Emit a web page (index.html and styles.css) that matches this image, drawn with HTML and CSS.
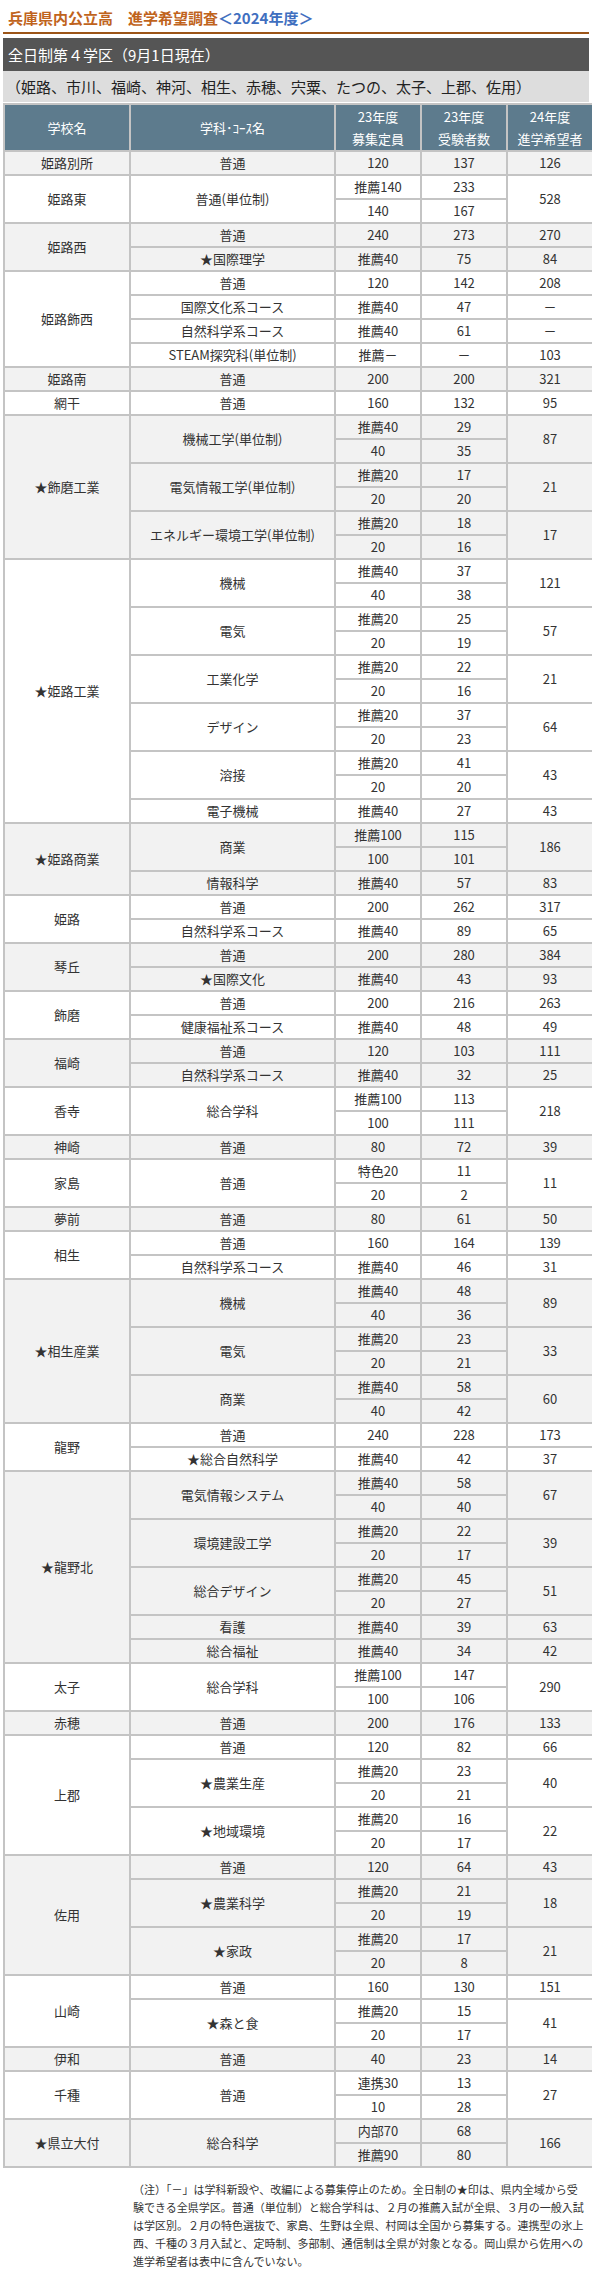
FILE: index.html
```html
<!DOCTYPE html>
<html lang="ja">
<head>
<meta charset="utf-8">
<title>兵庫県内公立高　進学希望調査</title>
<link rel="stylesheet" href="styles.css">
</head>
<body>
<div class="page">
  <h1 class="title">兵庫県内公立高　進学希望調査<span class="year">＜2024年度＞</span></h1>
  <div class="district">全日制第４学区（9月1日現在）</div>
  <div class="area">（姫路、市川、福崎、神河、相生、赤穂、宍粟、たつの、太子、上郡、佐用）</div>
  <table class="data">
    <colgroup>
      <col class="c-school"><col class="c-course"><col class="c-num"><col class="c-num"><col class="c-num">
    </colgroup>
    <thead>
      <tr><th>学校名</th><th>学科･ｺｰｽ名</th><th>23年度<br>募集定員</th><th>23年度<br>受験者数</th><th>24年度<br>進学希望者</th></tr>
    </thead>
    <tbody>
      <tr class="g"><td>姫路別所</td><td>普通</td><td>120</td><td>137</td><td>126</td></tr>

      <tr class="w"><td rowspan="2">姫路東</td><td rowspan="2">普通(単位制)</td><td>推薦140</td><td>233</td><td rowspan="2">528</td></tr>
      <tr class="w"><td>140</td><td>167</td></tr>

      <tr class="g"><td rowspan="2">姫路西</td><td>普通</td><td>240</td><td>273</td><td>270</td></tr>
      <tr class="g"><td>★国際理学</td><td>推薦40</td><td>75</td><td>84</td></tr>

      <tr class="w"><td rowspan="4">姫路飾西</td><td>普通</td><td>120</td><td>142</td><td>208</td></tr>
      <tr class="w"><td>国際文化系コース</td><td>推薦40</td><td>47</td><td>－</td></tr>
      <tr class="w"><td>自然科学系コース</td><td>推薦40</td><td>61</td><td>－</td></tr>
      <tr class="w"><td>STEAM探究科(単位制)</td><td>推薦－</td><td>－</td><td>103</td></tr>

      <tr class="g"><td>姫路南</td><td>普通</td><td>200</td><td>200</td><td>321</td></tr>
      <tr class="w"><td>網干</td><td>普通</td><td>160</td><td>132</td><td>95</td></tr>

      <tr class="g"><td rowspan="6">★飾磨工業</td><td rowspan="2">機械工学(単位制)</td><td>推薦40</td><td>29</td><td rowspan="2">87</td></tr>
      <tr class="g"><td>40</td><td>35</td></tr>
      <tr class="g"><td rowspan="2">電気情報工学(単位制)</td><td>推薦20</td><td>17</td><td rowspan="2">21</td></tr>
      <tr class="g"><td>20</td><td>20</td></tr>
      <tr class="g"><td rowspan="2">エネルギー環境工学(単位制)</td><td>推薦20</td><td>18</td><td rowspan="2">17</td></tr>
      <tr class="g"><td>20</td><td>16</td></tr>

      <tr class="w"><td rowspan="11">★姫路工業</td><td rowspan="2">機械</td><td>推薦40</td><td>37</td><td rowspan="2">121</td></tr>
      <tr class="w"><td>40</td><td>38</td></tr>
      <tr class="w"><td rowspan="2">電気</td><td>推薦20</td><td>25</td><td rowspan="2">57</td></tr>
      <tr class="w"><td>20</td><td>19</td></tr>
      <tr class="w"><td rowspan="2">工業化学</td><td>推薦20</td><td>22</td><td rowspan="2">21</td></tr>
      <tr class="w"><td>20</td><td>16</td></tr>
      <tr class="w"><td rowspan="2">デザイン</td><td>推薦20</td><td>37</td><td rowspan="2">64</td></tr>
      <tr class="w"><td>20</td><td>23</td></tr>
      <tr class="w"><td rowspan="2">溶接</td><td>推薦20</td><td>41</td><td rowspan="2">43</td></tr>
      <tr class="w"><td>20</td><td>20</td></tr>
      <tr class="w"><td>電子機械</td><td>推薦40</td><td>27</td><td>43</td></tr>

      <tr class="g"><td rowspan="3">★姫路商業</td><td rowspan="2">商業</td><td>推薦100</td><td>115</td><td rowspan="2">186</td></tr>
      <tr class="g"><td>100</td><td>101</td></tr>
      <tr class="g"><td>情報科学</td><td>推薦40</td><td>57</td><td>83</td></tr>

      <tr class="w"><td rowspan="2">姫路</td><td>普通</td><td>200</td><td>262</td><td>317</td></tr>
      <tr class="w"><td>自然科学系コース</td><td>推薦40</td><td>89</td><td>65</td></tr>

      <tr class="g"><td rowspan="2">琴丘</td><td>普通</td><td>200</td><td>280</td><td>384</td></tr>
      <tr class="g"><td>★国際文化</td><td>推薦40</td><td>43</td><td>93</td></tr>

      <tr class="w"><td rowspan="2">飾磨</td><td>普通</td><td>200</td><td>216</td><td>263</td></tr>
      <tr class="w"><td>健康福祉系コース</td><td>推薦40</td><td>48</td><td>49</td></tr>

      <tr class="g"><td rowspan="2">福崎</td><td>普通</td><td>120</td><td>103</td><td>111</td></tr>
      <tr class="g"><td>自然科学系コース</td><td>推薦40</td><td>32</td><td>25</td></tr>

      <tr class="w"><td rowspan="2">香寺</td><td rowspan="2">総合学科</td><td>推薦100</td><td>113</td><td rowspan="2">218</td></tr>
      <tr class="w"><td>100</td><td>111</td></tr>

      <tr class="g"><td>神崎</td><td>普通</td><td>80</td><td>72</td><td>39</td></tr>

      <tr class="w"><td rowspan="2">家島</td><td rowspan="2">普通</td><td>特色20</td><td>11</td><td rowspan="2">11</td></tr>
      <tr class="w"><td>20</td><td>2</td></tr>

      <tr class="g"><td>夢前</td><td>普通</td><td>80</td><td>61</td><td>50</td></tr>

      <tr class="w"><td rowspan="2">相生</td><td>普通</td><td>160</td><td>164</td><td>139</td></tr>
      <tr class="w"><td>自然科学系コース</td><td>推薦40</td><td>46</td><td>31</td></tr>

      <tr class="g"><td rowspan="6">★相生産業</td><td rowspan="2">機械</td><td>推薦40</td><td>48</td><td rowspan="2">89</td></tr>
      <tr class="g"><td>40</td><td>36</td></tr>
      <tr class="g"><td rowspan="2">電気</td><td>推薦20</td><td>23</td><td rowspan="2">33</td></tr>
      <tr class="g"><td>20</td><td>21</td></tr>
      <tr class="g"><td rowspan="2">商業</td><td>推薦40</td><td>58</td><td rowspan="2">60</td></tr>
      <tr class="g"><td>40</td><td>42</td></tr>

      <tr class="w"><td rowspan="2">龍野</td><td>普通</td><td>240</td><td>228</td><td>173</td></tr>
      <tr class="w"><td>★総合自然科学</td><td>推薦40</td><td>42</td><td>37</td></tr>

      <tr class="g"><td rowspan="8">★龍野北</td><td rowspan="2">電気情報システム</td><td>推薦40</td><td>58</td><td rowspan="2">67</td></tr>
      <tr class="g"><td>40</td><td>40</td></tr>
      <tr class="g"><td rowspan="2">環境建設工学</td><td>推薦20</td><td>22</td><td rowspan="2">39</td></tr>
      <tr class="g"><td>20</td><td>17</td></tr>
      <tr class="g"><td rowspan="2">総合デザイン</td><td>推薦20</td><td>45</td><td rowspan="2">51</td></tr>
      <tr class="g"><td>20</td><td>27</td></tr>
      <tr class="g"><td>看護</td><td>推薦40</td><td>39</td><td>63</td></tr>
      <tr class="g"><td>総合福祉</td><td>推薦40</td><td>34</td><td>42</td></tr>

      <tr class="w"><td rowspan="2">太子</td><td rowspan="2">総合学科</td><td>推薦100</td><td>147</td><td rowspan="2">290</td></tr>
      <tr class="w"><td>100</td><td>106</td></tr>

      <tr class="g"><td>赤穂</td><td>普通</td><td>200</td><td>176</td><td>133</td></tr>

      <tr class="w"><td rowspan="5">上郡</td><td>普通</td><td>120</td><td>82</td><td>66</td></tr>
      <tr class="w"><td rowspan="2">★農業生産</td><td>推薦20</td><td>23</td><td rowspan="2">40</td></tr>
      <tr class="w"><td>20</td><td>21</td></tr>
      <tr class="w"><td rowspan="2">★地域環境</td><td>推薦20</td><td>16</td><td rowspan="2">22</td></tr>
      <tr class="w"><td>20</td><td>17</td></tr>

      <tr class="g"><td rowspan="5">佐用</td><td>普通</td><td>120</td><td>64</td><td>43</td></tr>
      <tr class="g"><td rowspan="2">★農業科学</td><td>推薦20</td><td>21</td><td rowspan="2">18</td></tr>
      <tr class="g"><td>20</td><td>19</td></tr>
      <tr class="g"><td rowspan="2">★家政</td><td>推薦20</td><td>17</td><td rowspan="2">21</td></tr>
      <tr class="g"><td>20</td><td>8</td></tr>

      <tr class="w"><td rowspan="3">山崎</td><td>普通</td><td>160</td><td>130</td><td>151</td></tr>
      <tr class="w"><td rowspan="2">★森と食</td><td>推薦20</td><td>15</td><td rowspan="2">41</td></tr>
      <tr class="w"><td>20</td><td>17</td></tr>

      <tr class="g"><td>伊和</td><td>普通</td><td>40</td><td>23</td><td>14</td></tr>

      <tr class="w"><td rowspan="2">千種</td><td rowspan="2">普通</td><td>連携30</td><td>13</td><td rowspan="2">27</td></tr>
      <tr class="w"><td>10</td><td>28</td></tr>

      <tr class="g"><td rowspan="2">★県立大付</td><td rowspan="2">総合科学</td><td>内部70</td><td>68</td><td rowspan="2">166</td></tr>
      <tr class="g"><td>推薦90</td><td>80</td></tr>
    </tbody>
  </table>
  <p class="note">（注）「－」は学科新設や、改編による募集停止のため。全日制の★印は、県内全域から受験できる全県学区。普通（単位制）と総合学科は、２月の推薦入試が全県、３月の一般入試は学区別。２月の特色選抜で、家島、生野は全県、村岡は全国から募集する。連携型の氷上西、千種の３月入試と、定時制、多部制、通信制は全県が対象となる。岡山県から佐用への進学希望者は表中に含んでいない。</p>
</div>
</body>
</html>
```
FILE: styles.css
```css
html, body {
  margin: 0;
  padding: 0;
  background: #ffffff;
}

body {
  font-family: "Noto Sans CJK JP", "Noto Sans", sans-serif;
  color: #333333;
}

.page {
  padding: 0 3px;
}

.title {
  margin: 0;
  padding: 8px 0 4px 5px;
  font-size: 15px;
  line-height: 20px;
  font-weight: bold;
  color: #c0631c;
  border-bottom: 2px solid #9c5518;
}

.title .year {
  color: #3f6fbf;
}

.district {
  margin-top: 4px;
  height: 33px;
  line-height: 33px;
  padding-left: 5px;
  background: #555555;
  color: #ffffff;
  font-size: 15px;
}

.area {
  height: 31px;
  line-height: 31px;
  padding-left: 3px;
  background: #dddddd;
  color: #222222;
  font-size: 15px;
}

.data {
  width: 100%;
  margin-top: 1px;
  border-collapse: collapse;
  table-layout: fixed;
  font-size: 13px;
  border: 2px solid #c4c4c4;
}

.c-school { width: 126px; }
.c-course { width: 205px; }
.c-num { width: 86px; }

.data th,
.data td {
  border: 2px solid #c4c4c4;
  padding: 0;
  text-align: center;
  vertical-align: middle;
}

.data th {
  height: 45px;
  background: #5d7b8d;
  color: #ffffff;
  font-weight: normal;
  line-height: 22px;
}

.data td {
  height: 22px;
  line-height: 22px;
  color: #333333;
}

.data tr.g td {
  background: #f2f2f2;
}

.data tr.w td {
  background: #ffffff;
}

.note {
  margin: 12px 0 0 130px;
  width: 455px;
  font-size: 11px;
  line-height: 18px;
  color: #333333;
}
```
